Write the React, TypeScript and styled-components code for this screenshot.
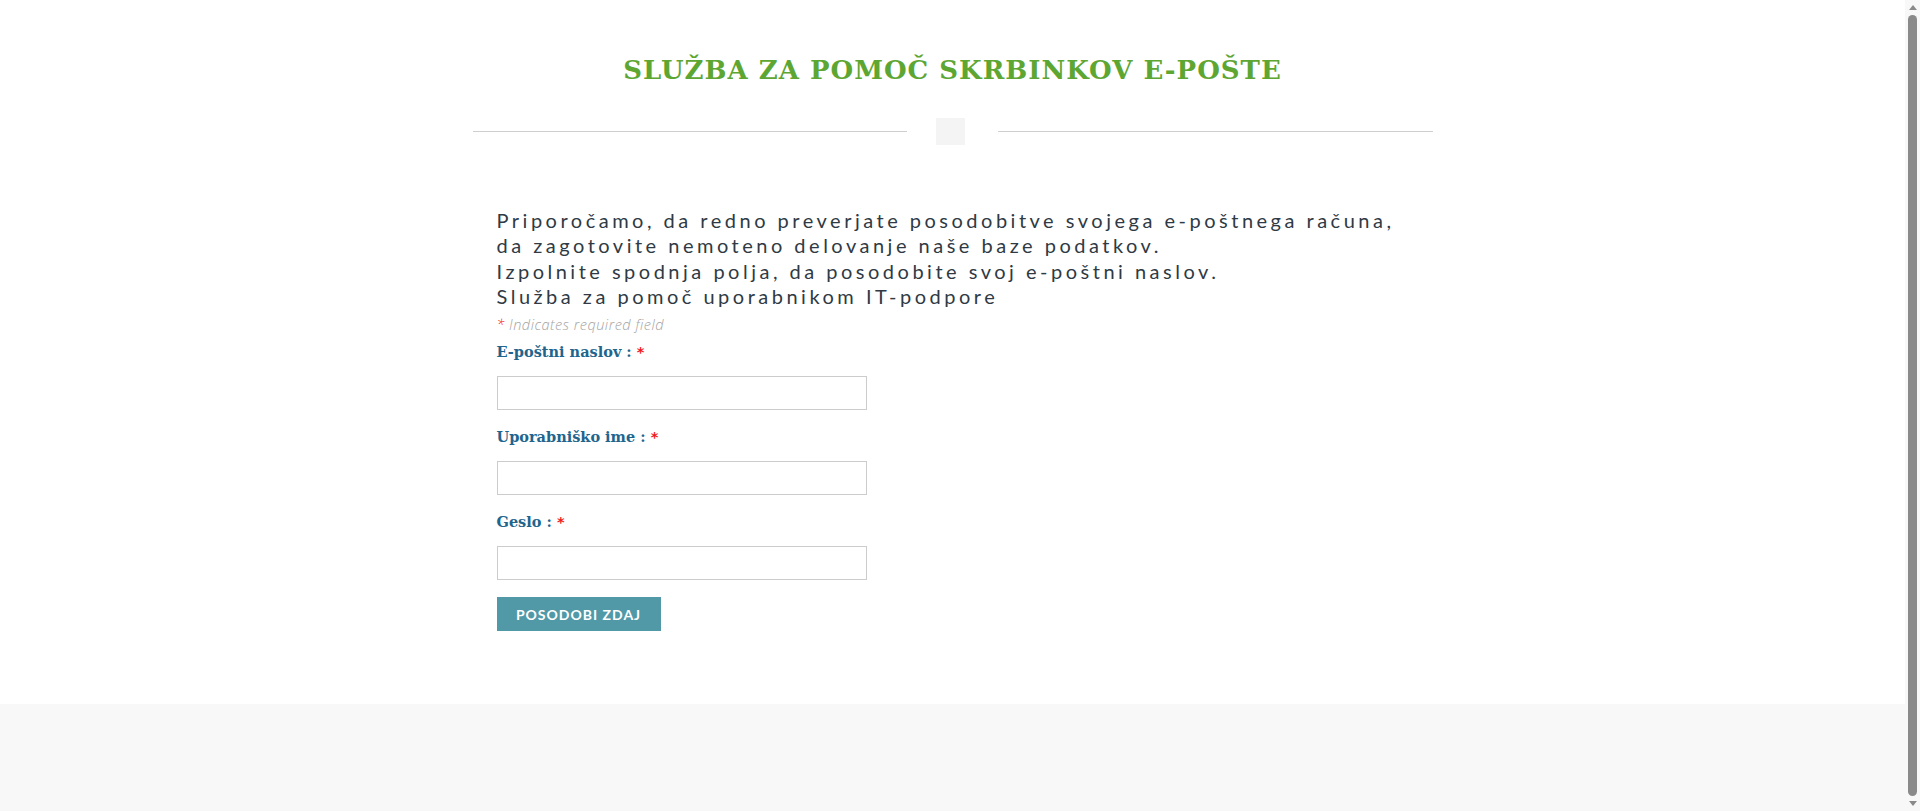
import React from 'react';
import styled, { createGlobalStyle } from 'styled-components';

const GlobalStyle = createGlobalStyle`
    html, body {
        margin: 0;
        padding: 0;
        background: #fff;
    }
    body {
        font-family: Lato, "Open Sans", sans-serif;
        padding-right: 15px;
    }
`

const fields = [
    { id: 'email', label: 'E-poštni naslov :', type: 'text' },
    { id: 'user', label: 'Uporabniško ime :', type: 'text' },
    { id: 'pass', label: 'Geslo :', type: 'password' },
];

export default function App() {
    return (
        <>
            <GlobalStyle />
            <Page>
                <Header>
                    <Title>Služba za pomoč skrbinkov e-pošte</Title>
                    <Divider>
                        <DividerLine />
                        <DividerBox />
                        <DividerLine />
                    </Divider>
                </Header>
                <Content>
                    <Intro>
                        Priporočamo, da redno preverjate posodobitve svojega e-poštnega računa,<br />
                        da zagotovite nemoteno delovanje naše baze podatkov.<br />
                        Izpolnite spodnja polja, da posodobite svoj e-poštni naslov.<br />
                        Služba za pomoč uporabnikom IT-podpore
                    </Intro>
                    <RequiredNote><Star>*</Star> Indicates required field</RequiredNote>
                    <Form onSubmit={(e) => e.preventDefault()}>
                        {fields.map((f) => (
                            <Field key={f.id}>
                                <Label htmlFor={f.id}>{f.label} <Star>*</Star></Label>
                                <Input id={f.id} type={f.type} />
                            </Field>
                        ))}
                        <SubmitButton type="submit">Posodobi zdaj</SubmitButton>
                    </Form>
                </Content>
                <Footer />
            </Page>
            <ScrollTrack>
                <ScrollArrow $down={false} />
                <ScrollThumb />
                <ScrollArrow $down />
            </ScrollTrack>
        </>
    );
}

const Page = styled.div`
    display: flex;
    flex-direction: column;
    min-height: 845px;
`
const Header = styled.header`
    width: 960px;
    margin: 0 auto;
    padding-top: 52px;
    display: flex;
    flex-direction: column;
    align-items: center;
`
const Title = styled.h1`
    margin: 0;
    font-family: "DejaVu Serif", serif;
    font-size: 26px;
    font-weight: 600;
    line-height: 36px;
    letter-spacing: 1px;
    text-transform: uppercase;
    color: #5ea632;
`
const Divider = styled.div`
    width: 100%;
    margin-top: 30px;
    display: flex;
    align-items: center;
`
const DividerLine = styled.div`
    flex: 1;
    height: 1px;
    background: #cfcfcf;
`
const DividerBox = styled.div`
    width: 29px;
    height: 27px;
    margin: 0 33px 0 29px;
    background: #f4f4f4;
`
const Content = styled.main`
    width: 912px;
    margin: 0 auto;
    padding: 63px 24px 36px;
    flex: 1;
`
const Intro = styled.p`
    margin: 0;
    font-family: Lato, sans-serif;
    font-size: 20px;
    line-height: 25.3px;
    letter-spacing: 3.5px;
    color: #2f3a44;
`
const RequiredNote = styled.p`
    margin: 7px 0 0;
    font-family: "Open Sans", sans-serif;
    font-style: italic;
    font-weight: 300;
    font-size: 14.5px;
    line-height: 18px;
    letter-spacing: 0.5px;
    color: #a3a3a3;
`
const Star = styled.span`
    color: #f01b1b;
`
const Form = styled.form`
    display: flex;
    flex-direction: column;
    align-items: flex-start;
    margin-top: 8px;
`
const Field = styled.div`
    display: flex;
    flex-direction: column;
    margin-bottom: 17px;
`
const Label = styled.label`
    font-family: "DejaVu Serif", serif;
    font-size: 14.5px;
    font-weight: 700;
    line-height: 20px;
    color: #21658d;
    margin-bottom: 14px;
    ${Star} {
        font-family: "DejaVu Sans", sans-serif;
    }
`
const Input = styled.input`
    box-sizing: border-box;
    width: 370px;
    height: 34px;
    padding: 6px 10px;
    border: 1px solid #cccccc;
    background: #fff;
    font-size: 14px;
    outline: none;
`
const SubmitButton = styled.button`
    box-sizing: border-box;
    width: 164px;
    height: 34px;
    border: none;
    background: #5299a8;
    color: #fff;
    font-family: Lato, sans-serif;
    font-size: 14px;
    font-weight: 700;
    letter-spacing: 1px;
    text-transform: uppercase;
    cursor: pointer;
`
const Footer = styled.footer`
    height: 141px;
    background: #f8f8f8;
`
const ScrollTrack = styled.div`
    position: fixed;
    top: 0;
    right: 0;
    bottom: 0;
    width: 15px;
    background: #f8f8f8;
    display: flex;
    flex-direction: column;
    align-items: center;
    padding: 5px 0;
    box-sizing: border-box;
    gap: 5px;
`
const ScrollThumb = styled.div`
    flex: 1;
    width: 9px;
    border-radius: 5px;
    background: #8a8a8a;
`
const ScrollArrow = styled.div<{ $down: boolean }>`
    width: 0;
    height: 0;
    border-left: 4.5px solid transparent;
    border-right: 4.5px solid transparent;
    ${(p) => p.$down
        ? 'border-top: 5px solid #8a8a8a;'
        : 'border-bottom: 5px solid #8a8a8a;'}
`
